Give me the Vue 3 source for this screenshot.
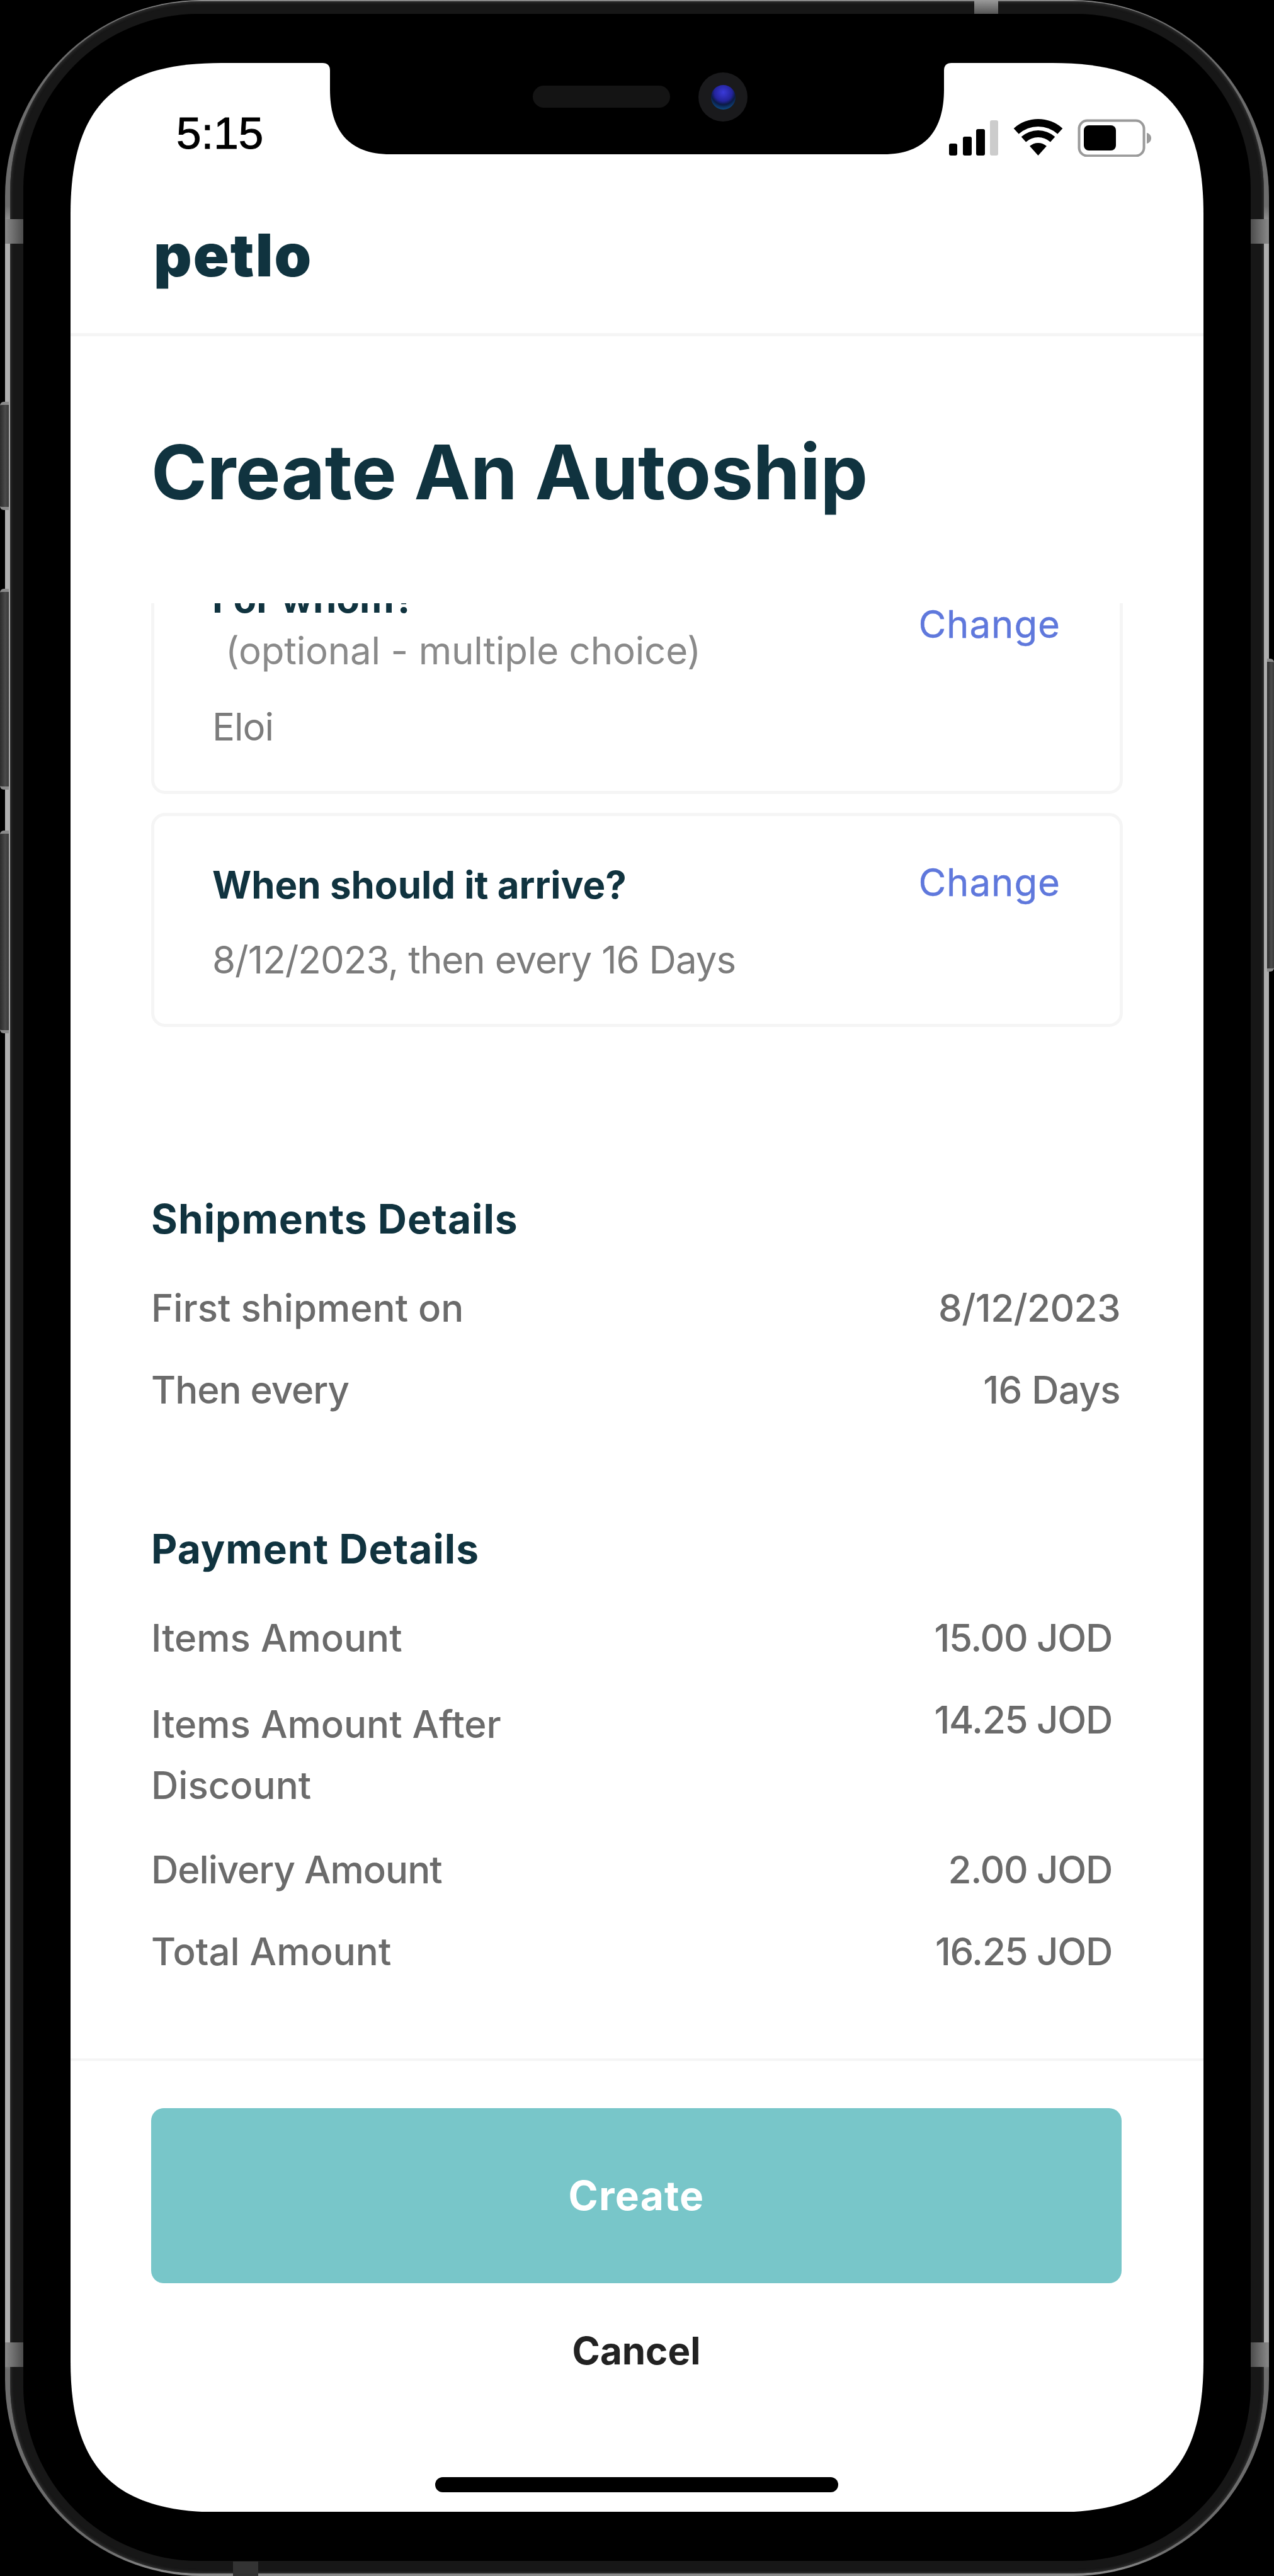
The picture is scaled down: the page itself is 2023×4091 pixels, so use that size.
<script setup>
const shipments = [
  { label: 'First shipment on', value: '8/12/2023' },
  { label: 'Then every', value: '16 Days', tight: true },
]
const payments = [
  { label: 'Items Amount', value: '15.00 JOD' },
  { label: 'Items Amount After Discount', value: '14.25 JOD', wrap: true },
  { label: 'Delivery Amount', value: '2.00 JOD', tight: true },
  { label: 'Total Amount', value: '16.25 JOD' },
]
</script>

<template>
  <div class="stage">
    <i class="side-btn sb1"></i>
    <i class="side-btn sb2"></i>
    <i class="side-btn sb3"></i>
    <i class="side-btn sb4"></i>
    <div class="rim">
      <div class="band">
        <div class="bezel">
          <div class="screen">
            <div class="status">
              <span class="time">5:15</span>
              <svg class="status-icons" width="322" height="60" viewBox="0 0 322 60">
                <rect x="0" y="39" width="13" height="19" rx="3" fill="#000" />
                <rect x="22" y="28" width="14" height="30" rx="3" fill="#000" />
                <rect x="43" y="16" width="14" height="42" rx="3" fill="#000" />
                <rect x="65" y="2" width="13" height="56" rx="3" fill="#ccc" />
                <path d="M102.7 14.9A58 58 0 0 1 180.3 14.9L172.3 23.8A46 46 0 0 0 110.7 23.8Z" fill="#000" />
                <path d="M114.7 28.3A40 40 0 0 1 168.3 28.3L160.9 36.4A29 29 0 0 0 122.1 36.4Z" fill="#000" />
                <path d="M128.1 43.1A20 20 0 0 1 154.9 43.1L141.5 58Z" fill="#000" />
                <rect x="206.5" y="2.500" width="103" height="56" rx="13" fill="none" stroke="#9a9a9a" stroke-width="4" />
                <rect x="214" y="10" width="51" height="40" rx="8" fill="#000" />
                <path d="M314 22C318 23 321 26 321 30.500C321 35 318 38 314 39Z" fill="#9a9a9a" />
              </svg>
            </div>

            <header class="brand">
              <span class="logo">petlo</span>
            </header>

            <h1 class="title">Create An Autoship</h1>

            <div class="scroller">
              <section class="card card-scrolled">
                <div class="card-head">
                  <div class="card-title">
                    <span class="block">For whom?</span>
                    <span class="optional">(optional - multiple choice)</span>
                  </div>
                  <span class="change">Change</span>
                </div>
                <p class="card-body">Eloi</p>
              </section>
              <section class="card">
                <div class="card-head">
                  <div class="card-title">When should it arrive?</div>
                  <span class="change">Change</span>
                </div>
                <p class="card-body">8/12/2023, then every 16 Days</p>
              </section>
            </div>

            <section class="details details-first">
              <h2 class="details-title">Shipments Details</h2>
              <div v-for="row in shipments" :key="row.label" class="row">
                <span class="label" :class="{ tight: row.tight }">{{ row.label }}</span>
                <span class="value">{{ row.value }}</span>
              </div>
            </section>

            <section class="details details-pay">
              <h2 class="details-title">Payment Details</h2>
              <div v-for="row in payments" :key="row.label" class="row" :class="{ 'row-wrap': row.wrap }">
                <span class="label" :class="{ tight: row.tight }">{{ row.label }}</span>
                <span class="value">{{ row.value }}</span>
              </div>
            </section>

            <footer class="actions">
              <button class="create" type="button">Create</button>
              <button class="cancel" type="button">Cancel</button>
              <div class="home-bar"></div>
            </footer>

            <svg class="notch" width="999" height="146" viewBox="0 0 999 146">
              <path d="M0 0Q12 0 12 12V42C12 105 40 145 108 145H891C959 145 987 105 987 42V12Q987 0 999 0Z" fill="#000" />
            </svg>
            <i class="speaker"></i>
            <i class="camera"><i class="lens"></i></i>
          </div>
        </div>
      </div>
    </div>
    <i class="mark m-left-top"></i>
    <i class="mark m-right-top"></i>
    <i class="mark m-left-bottom"></i>
    <i class="mark m-right-bottom"></i>
    <i class="mark m-top"></i>
    <i class="mark m-bottom"></i>
  </div>
</template>

<style>
html, body { margin: 0; background: #000; }
</style>

<style scoped>
* { box-sizing: border-box; }
.stage {
  position: relative;
  width: 2023px;
  height: 4091px;
  padding: 0 8px;
  background: #000;
  font-family: Inter, "Noto Sans", sans-serif;
  overflow: hidden;
}
.rim {
  height: 4091px;
  padding: 2px 8px 4px;
  border-radius: 312px;
  background: linear-gradient(180deg, #8a8a8a 0, #6c6c6c 1%, #6c6c6c 8%, #aeaeae 9%, #aeaeae 91%, #6c6c6c 92%, #6c6c6c 99%, #8a8a8a 100%);
}
.band {
  height: 100%;
  padding: 20px 21px;
  border-radius: 302px;
  background: #171717;
  box-shadow: inset 0 0 5px 1px #3c3c3c;
}
.bezel {
  height: 100%;
  padding: 78px 75px;
  border-radius: 278px;
  background: #000;
}
.screen {
  position: relative;
  display: flex;
  flex-direction: column;
  height: 100%;
  background: #fff;
  overflow: hidden;
  clip-path: path("M0 240C0 70 70 0 240 0H1559C1729 0 1799 70 1799 240V3650C1799 3820 1729 3890 1559 3890H240C70 3890 0 3820 0 3650Z");
}
.status {
  display: flex;
  justify-content: space-between;
  align-items: flex-start;
  flex: none;
  height: 148px;
  padding: 76px 82px 0 168px;
}
.time {
  font-family: "Liberation Sans", Arial, sans-serif;
  font-size: 71px;
  line-height: 71px;
  color: #000;
  -webkit-text-stroke: 1px #000;
}
.status-icons { margin-top: 13px; display: block; }
.brand {
  flex: none;
  height: 286px;
  padding: 107px 0 0 132px;
  border-bottom: 5px solid #f5f5f5;
}
.logo {
  display: block;
  font-weight: 900;
  font-size: 94px;
  line-height: 100px;
  letter-spacing: 2px;
  color: #10333f;
}
.title {
  flex: none;
  margin: 146px 128px 138px;
  font-size: 120px;
  line-height: 140px;
  font-weight: 700;
  letter-spacing: -0.3px;
  color: #10333f;
}
.scroller {
  flex: none;
  height: 700px;
  padding: 0 128px;
  overflow: hidden;
}
.card {
  border: 5px solid #f5f5f5;
  border-radius: 22px;
  padding: 74px 94px 67px 92px;
}
.card + .card { margin-top: 30px; }
.card-scrolled { margin-top: -127px; }
.card-head {
  display: flex;
  justify-content: space-between;
  align-items: flex-start;
}
.card-title {
  font-size: 60px;
  line-height: 70px;
  font-weight: 700;
  color: #10333f;
}
.card-scrolled .card-title { line-height: 82px; }
.block { display: block; }
.optional {
  display: block;
  margin-left: 21px;
  font-weight: 400;
  letter-spacing: -0.2px;
  color: #8a8a8a;
}
.change {
  margin-top: -4px;
  font-size: 60px;
  line-height: 70px;
  letter-spacing: 0.9px;
  color: #5f78dc;
  -webkit-text-stroke: 0.4px #5f78dc;
}
.card-scrolled .change { margin-top: 46px; }
.card-body {
  margin: 49px 0 0;
  font-size: 60px;
  line-height: 70px;
  letter-spacing: -1px;
  color: #7c7c7c;
}
.card-scrolled .card-body { margin-top: 45px; }
.details {
  flex: none;
  display: flex;
  flex-direction: column;
  gap: 60px;
  padding: 0 128px;
}
.details-first { margin-top: 243px; }
.details-pay { margin-top: 183px; }
.details-title {
  margin: 0 0 11px;
  font-size: 64px;
  line-height: 70px;
  font-weight: 700;
  letter-spacing: 1px;
  color: #10333f;
}
.row {
  display: flex;
  justify-content: space-between;
  align-items: flex-start;
  padding-right: 4px;
  font-size: 60px;
  line-height: 70px;
  color: #6b6b6b;
}
.details-pay .row { padding-right: 17px; }
.label { font-weight: 500; }
.tight { letter-spacing: -1px; }
.value { font-weight: 500; letter-spacing: -0.6px; white-space: nowrap; }
.details-pay .value { letter-spacing: -1.3px; }
.row-wrap .label { width: 660px; line-height: 97px; margin-top: -6px; margin-bottom: -10px; }
.actions {
  display: flex;
  flex-direction: column;
  align-items: center;
  flex: 1;
  margin-top: 135px;
  border-top: 4px solid #f5f5f5;
  padding: 75px 130px 0 128px;
}
.create {
  width: 100%;
  height: 278px;
  flex: none;
  border: 0;
  border-radius: 20px;
  background: #78c6c9;
  color: #fff;
  font: 700 64px/70px Inter, sans-serif;
  letter-spacing: 1.2px;
}
.cancel {
  margin-top: 72px;
  border: 0;
  padding: 0;
  background: none;
  color: #222;
  font: 700 60px/70px Inter, sans-serif;
}
.home-bar {
  flex: none;
  width: 640px;
  height: 24px;
  margin-top: 166px;
  border-radius: 12px;
  background: #000;
}
.notch { position: absolute; left: 400px; top: 0; }
.speaker {
  position: absolute;
  left: 734px;
  top: 36px;
  width: 218px;
  height: 35px;
  border-radius: 18px;
  background: #141414;
}
.camera {
  position: absolute;
  left: 997px;
  top: 15px;
  width: 78px;
  height: 78px;
  display: flex;
  align-items: center;
  justify-content: center;
  border-radius: 50%;
  background: #1a1a1c;
}
.lens {
  width: 39px;
  height: 39px;
  border-radius: 50%;
  background: radial-gradient(circle at 50% 30%, #3a3ad8 0, #23239a 42%, #0b1b44 58%, #0e5c9c 90%);
}
.side-btn {
  position: absolute;
  background: linear-gradient(90deg, #2c2c2c, #4a4a4a 60%, #3a3a3a);
  border-top: 5px solid #8a8a8a;
  border-bottom: 5px solid #8a8a8a;
}
.sb1 { left: 0; top: 638px; width: 14px; height: 172px; border-radius: 6px 0 0 6px; }
.sb2 { left: 0; top: 935px; width: 14px; height: 319px; border-radius: 6px 0 0 6px; }
.sb3 { left: 0; top: 1319px; width: 14px; height: 322px; border-radius: 6px 0 0 6px; }
.sb4 { left: 2012px; top: 1046px; width: 11px; height: 497px; border-radius: 0 6px 6px 0; }
.mark { position: absolute; background: linear-gradient(90deg, #8a8a8a, #4c4c4c); }
.m-left-top { left: 8px; top: 348px; width: 29px; height: 39px; }
.m-right-top { left: 1986px; top: 348px; width: 29px; height: 39px; background: linear-gradient(270deg, #8a8a8a, #4c4c4c); }
.m-left-bottom { left: 8px; top: 3720px; width: 29px; height: 39px; }
.m-right-bottom { left: 1986px; top: 3720px; width: 29px; height: 39px; background: linear-gradient(270deg, #8a8a8a, #4c4c4c); }
.m-top { left: 1547px; top: 0; width: 38px; height: 22px; background: linear-gradient(180deg, #9a9a9a, #555); }
.m-bottom { left: 370px; top: 4068px; width: 40px; height: 23px; background: #333; }
</style>
